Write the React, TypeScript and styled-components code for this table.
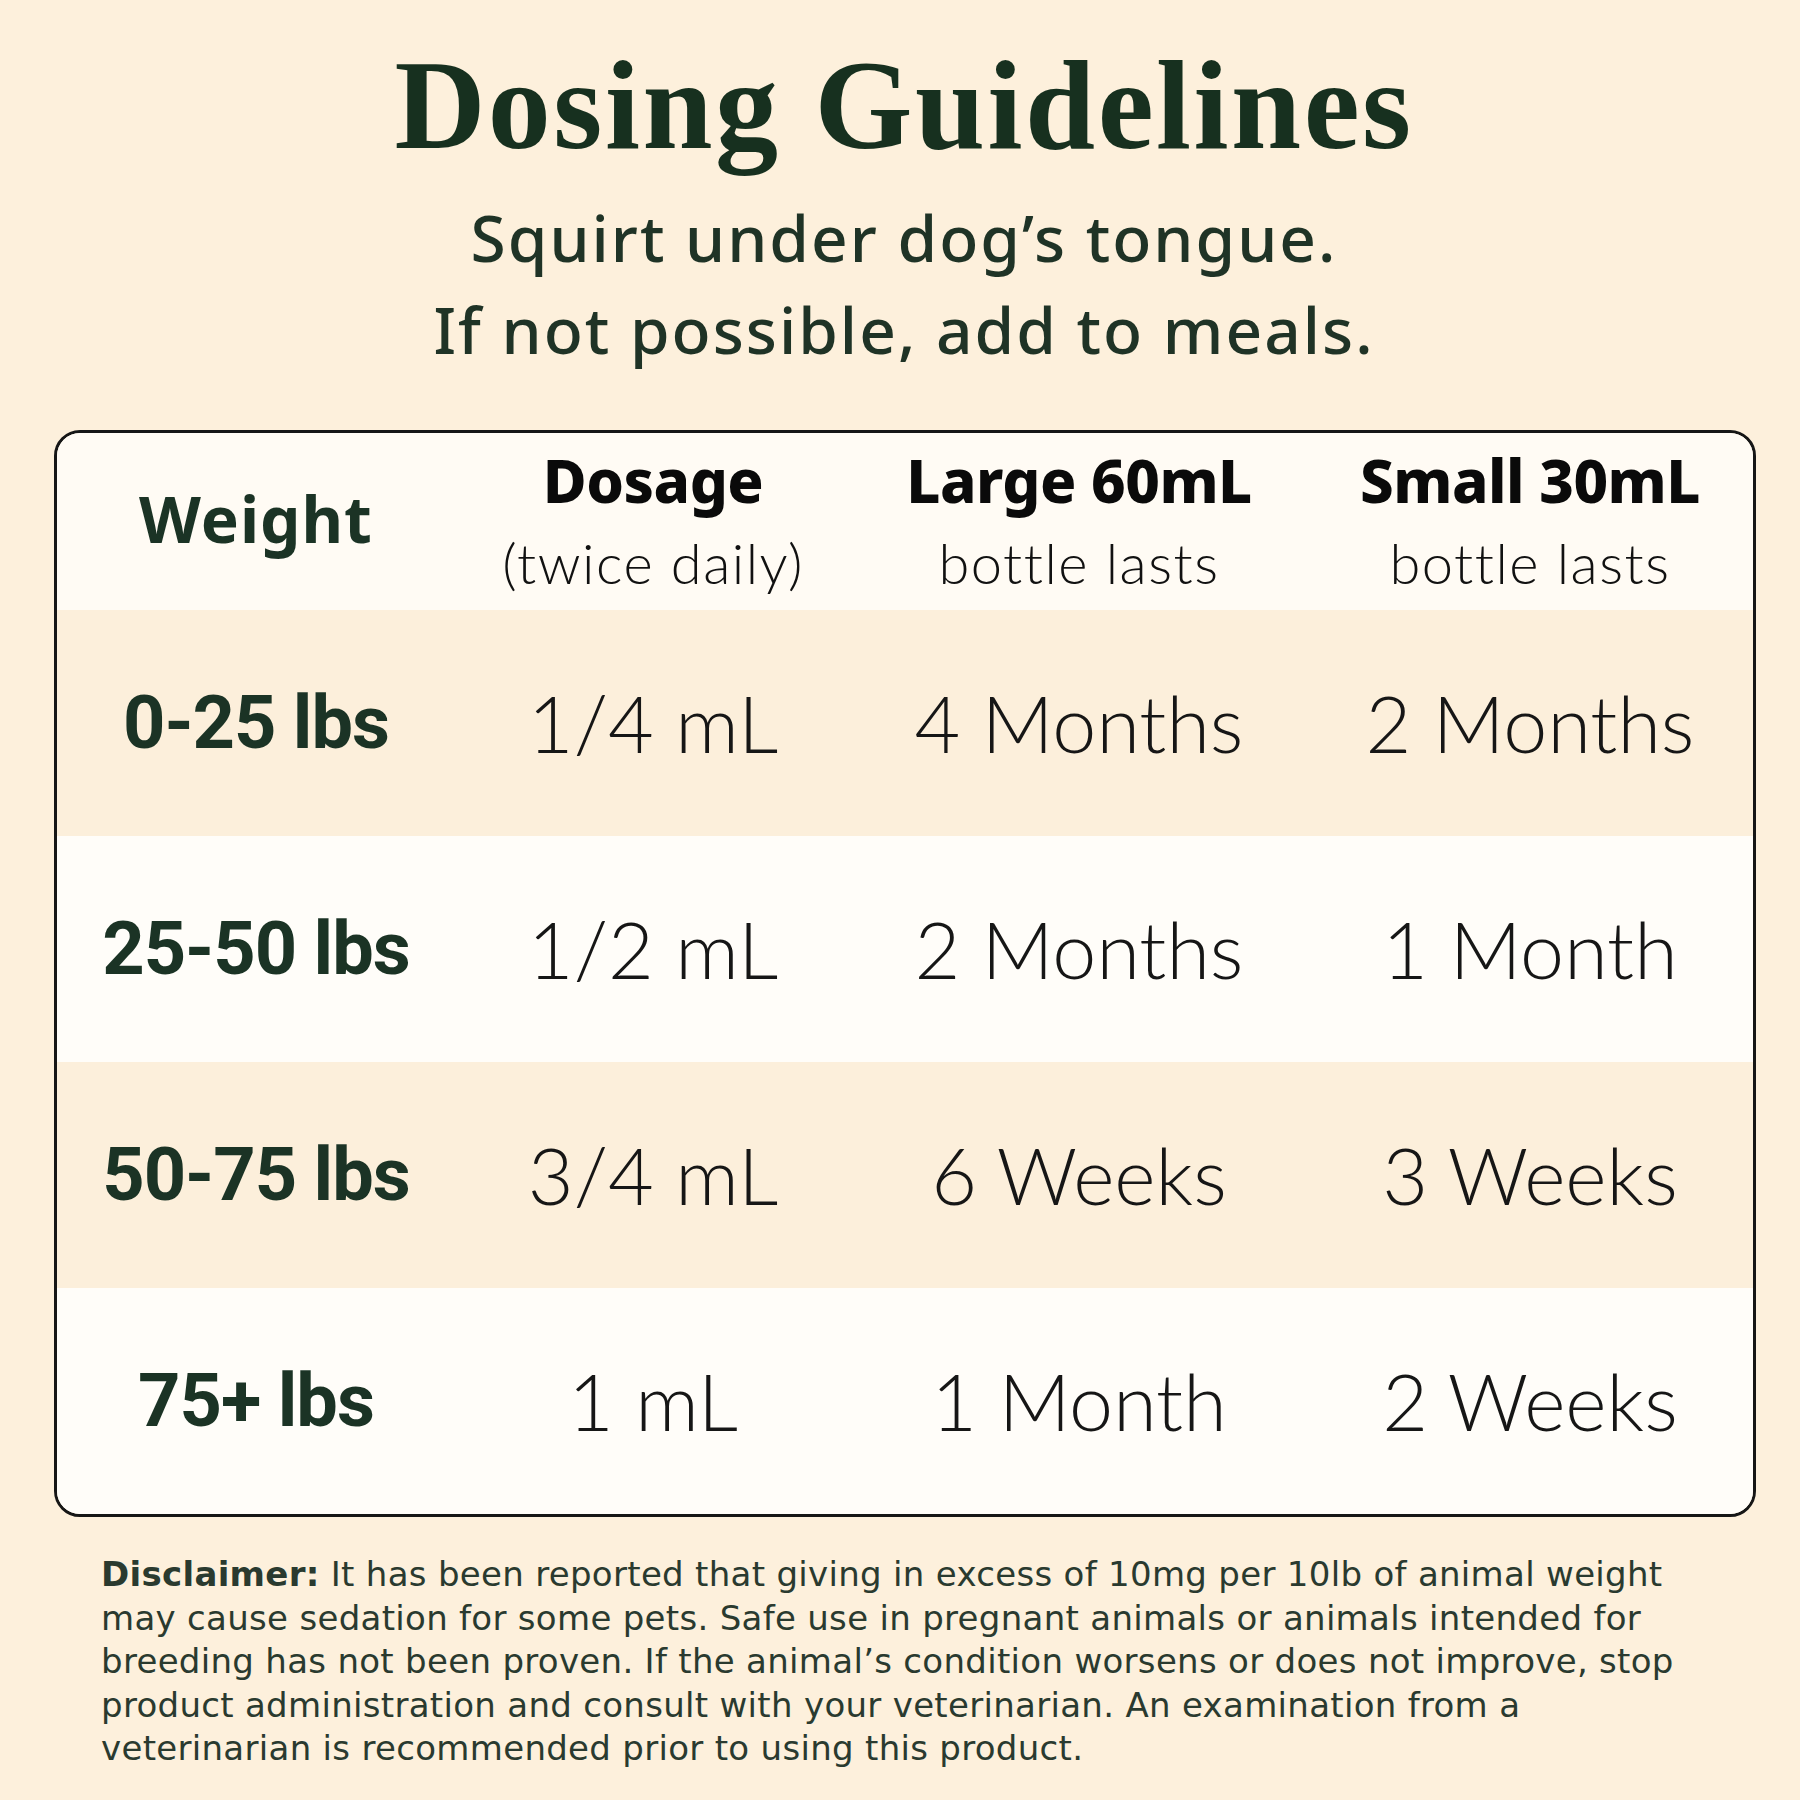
import React from "react";
import styled, { createGlobalStyle } from "styled-components";

const Global = createGlobalStyle`
  html, body { margin: 0; padding: 0; background: #fdf0dc; }
  #root { width: 1800px; height: 1800px; }
`;

const Page = styled.main`
  box-sizing: border-box;
  width: 1800px;
  height: 1800px;
  background: #fdf0dc;
  padding: 46px 46px 0 54px;
  display: flex;
  flex-direction: column;
  align-items: stretch;
  color: #1b3325;
`;

const Title = styled.h1`
  margin: 0;
  text-align: center;
  font-family: "Liberation Serif", "DejaVu Serif", serif;
  font-weight: 700;
  font-size: 126px;
  line-height: 120px;
  letter-spacing: 2.5px;
  color: #17301f;
`;

const Subtitle = styled.p`
  margin: 26px 0 0;
  text-align: center;
  font-family: "Noto Sans", "Open Sans", sans-serif;
  font-weight: 500;
  font-size: 64px;
  line-height: 92px;
  letter-spacing: 2px;
  color: #1f3326;
`;

const Table = styled.section`
  margin-top: 54px;
  box-sizing: border-box;
  width: 1702px;
  border: 3px solid #161616;
  border-radius: 26px;
  overflow: hidden;
  display: grid;
  grid-template-columns: 398px 396px 456px 1fr;
  grid-auto-rows: 226px;
  grid-template-rows: 177px;
`;

const Cell = styled.div<{ $tone: "head" | "beige" | "white" }>`
  display: flex;
  flex-direction: column;
  align-items: center;
  justify-content: center;
  text-align: center;
  background: ${(p) =>
    p.$tone === "head" ? "#fffbf4" : p.$tone === "beige" ? "#fcefdb" : "#fffdf9"};
`;

const HeadMain = styled.div`
  font-family: "Noto Sans", "Open Sans", sans-serif;
  font-weight: 800;
  font-size: 60px;
  line-height: 64px;
  color: #0a0a0a;
  letter-spacing: -0.5px;
`;

const HeadSub = styled.div`
  font-family: Lato, "Noto Sans", sans-serif;
  font-weight: 300;
  font-size: 56px;
  line-height: 64px;
  letter-spacing: 1.5px;
  color: #111;
  margin-top: 19px;
`;

const WeightHead = styled.div`
  font-family: "Noto Sans", "Open Sans", sans-serif;
  font-weight: 700;
  font-size: 64px;
  line-height: 70px;
  letter-spacing: 1px;
  color: #1b3325;
  margin-bottom: 6px;
`;

const WeightLabel = styled.div`
  font-family: Roboto, "Liberation Sans", sans-serif;
  font-weight: 700;
  font-size: 74px;
  line-height: 80px;
  color: #1b3325;
  letter-spacing: -1px;
`;

const Value = styled.div`
  font-family: Lato, "Noto Sans", sans-serif;
  font-weight: 300;
  font-size: 79px;
  line-height: 86px;
  color: #161616;
`;

const Disclaimer = styled.p`
  margin: 36px 0 0 47px;
  font-family: "DejaVu Sans", "Noto Sans", sans-serif;
  font-weight: 400;
  font-size: 34px;
  line-height: 43.6px;
  letter-spacing: 0.3px;
  color: #2a3a2f;
`;

const Line = styled.span`
  display: block;
  white-space: nowrap;
`;

const Strong = styled.b`
  font-weight: 700;
`;

const rows = [
  ["0-25 lbs", "1/4 mL", "4 Months", "2 Months"],
  ["25-50 lbs", "1/2 mL", "2 Months", "1 Month"],
  ["50-75 lbs", "3/4 mL", "6 Weeks", "3 Weeks"],
  ["75+ lbs", "1 mL", "1 Month", "2 Weeks"],
];

export default function App() {
  return (
    <>
      <Global />
      <Page>
        <Title>Dosing Guidelines</Title>
        <Subtitle>
          Squirt under dog’s tongue.
          <br />
          If not possible, add to meals.
        </Subtitle>
        <Table>
          <Cell $tone="head">
            <WeightHead>Weight</WeightHead>
          </Cell>
          <Cell $tone="head">
            <HeadMain>Dosage</HeadMain>
            <HeadSub>(twice daily)</HeadSub>
          </Cell>
          <Cell $tone="head">
            <HeadMain>Large 60mL</HeadMain>
            <HeadSub>bottle lasts</HeadSub>
          </Cell>
          <Cell $tone="head">
            <HeadMain>Small 30mL</HeadMain>
            <HeadSub>bottle lasts</HeadSub>
          </Cell>
          {rows.map((r, i) => {
            const tone = i % 2 === 0 ? "beige" : "white";
            return (
              <React.Fragment key={r[0]}>
                <Cell $tone={tone}>
                  <WeightLabel>{r[0]}</WeightLabel>
                </Cell>
                <Cell $tone={tone}>
                  <Value>{r[1]}</Value>
                </Cell>
                <Cell $tone={tone}>
                  <Value>{r[2]}</Value>
                </Cell>
                <Cell $tone={tone}>
                  <Value>{r[3]}</Value>
                </Cell>
              </React.Fragment>
            );
          })}
        </Table>
        <Disclaimer>
          <Line>
            <Strong>Disclaimer:</Strong> It has been reported that giving in excess of 10mg per 10lb of animal weight
          </Line>
          <Line>may cause sedation for some pets. Safe use in pregnant animals or animals intended for</Line>
          <Line>breeding has not been proven. If the animal’s condition worsens or does not improve, stop</Line>
          <Line>product administration and consult with your veterinarian. An examination from a</Line>
          <Line>veterinarian is recommended prior to using this product.</Line>
        </Disclaimer>
      </Page>
    </>
  );
}
